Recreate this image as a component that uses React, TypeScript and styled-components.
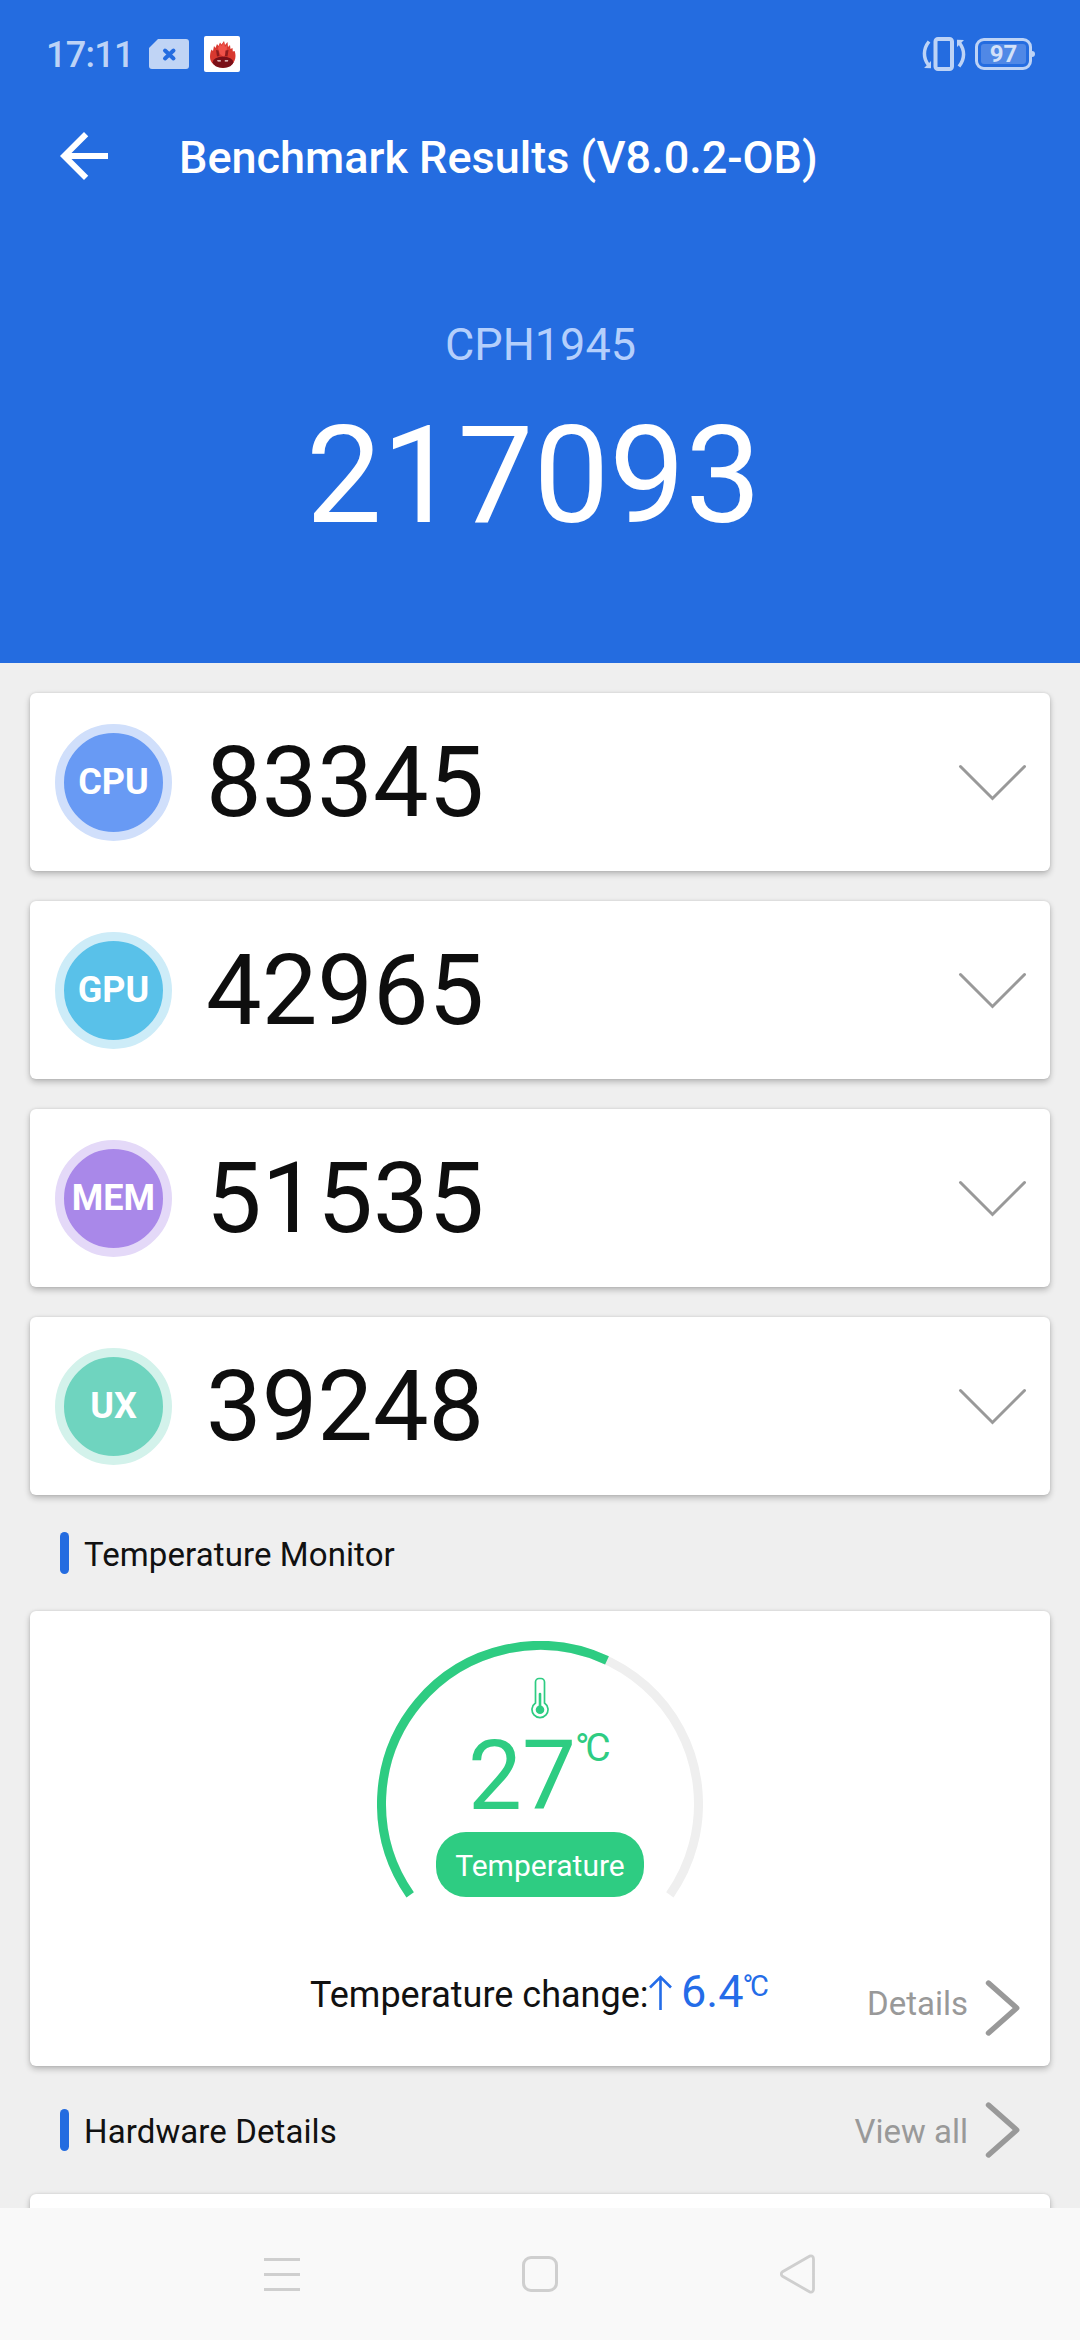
import React from 'react';
import styled, { createGlobalStyle } from 'styled-components';

const Global = createGlobalStyle`
  * { box-sizing: border-box; }
  body { margin: 0; background: #efefef; font-family: Roboto, "Noto Sans", sans-serif; }
  svg { display: block; flex: none; }
`;

const Screen = styled.div`
  width: 1080px;
  height: 2340px;
  display: flex;
  flex-direction: column;
  overflow: hidden;
  background: #efefef;
`;

const Header = styled.header`
  height: 663px;
  flex: none;
  background: #246ce0;
  display: flex;
  flex-direction: column;
`;

const StatusBar = styled.div`
  height: 108px;
  padding: 0 45px 0 46px;
  display: flex;
  align-items: center;
  justify-content: space-between;
  color: #bdd3f6;
`;

const StatusGroup = styled.div<{ $gap: number }>`
  display: flex;
  align-items: center;
  gap: ${(p) => p.$gap}px;
`;

const Clock = styled.span`
  width: 88px;
  font-size: 36px;
  line-height: 42px;
  font-weight: 500;
  letter-spacing: -0.7px;
  padding-top: 2px;
`;

const Battery = styled.div`
  width: 57px;
  height: 32px;
  margin-right: 3px;
  border: 3px solid #bdd3f6;
  border-radius: 9px;
  padding: 3px;
  position: relative;
  &::after {
    content: '';
    position: absolute;
    right: -6px;
    top: 10px;
    width: 3px;
    height: 6px;
    border-radius: 0 3px 3px 0;
    background: #bdd3f6;
  }
`;

const BatteryLevel = styled.div`
  height: 20px;
  border-radius: 3px;
  background: #5088e6;
  color: #d3e1f9;
  font-size: 24px;
  line-height: 20px;
  font-weight: 700;
  text-align: center;
`;

const TitleBar = styled.div`
  height: 96px;
  padding-left: 48px;
  display: flex;
  align-items: center;
  gap: 59px;
`;

const Title = styled.h1`
  margin: 0;
  padding-top: 3px;
  font-size: 45px;
  line-height: 54px;
  font-weight: 500;
  color: #fff;
`;

const Summary = styled.div`
  display: flex;
  flex-direction: column;
  align-items: center;
  padding-top: 114px;
`;

const Device = styled.div`
  padding-left: 1px;
  font-size: 45px;
  line-height: 54px;
  color: #b4cffc;
`;

const Total = styled.div`
  font-size: 135px;
  line-height: 158px;
  margin-top: 25px;
  padding-right: 13px;
  color: #fff;
`;

const Content = styled.main`
  flex: 1;
  min-height: 0;
  overflow: hidden;
  padding: 30px 30px 0;
  display: flex;
  flex-direction: column;
`;

const Card = styled.section<{ $height: number }>`
  height: ${(p) => p.$height}px;
  flex: none;
  border-radius: 6px;
  background: #fff;
  box-shadow: 0 3px 6px rgba(0, 0, 0, 0.24), 0 0 3px rgba(0, 0, 0, 0.1);
`;

const ScoreList = styled.div`
  display: flex;
  flex-direction: column;
  gap: 30px;
`;

const ScoreCard = styled(Card)`
  display: flex;
  align-items: center;
  padding: 0 24px 0 25px;
`;

const Badge = styled.div<{ $fill: string; $ring: string }>`
  width: 117px;
  height: 117px;
  flex: none;
  border-radius: 50%;
  border: 9px solid ${(p) => p.$ring};
  background: ${(p) => p.$fill};
  display: flex;
  align-items: center;
  justify-content: center;
  color: #fff;
  font-size: 36px;
  font-weight: 700;
`;

const Score = styled.div`
  flex: 1;
  margin-left: 34px;
  font-size: 99px;
  line-height: 116px;
  color: #0e0e0e;
`;

const SectionHead = styled.div<{ $height: number; $pad: number }>`
  height: ${(p) => p.$height}px;
  padding: ${(p) => p.$pad}px 28px 0 30px;
  flex: none;
  display: flex;
  align-items: flex-start;
`;

const Marker = styled.div`
  width: 9px;
  height: 42px;
  border-radius: 5px;
  background: #246ce0;
`;

const SectionTitle = styled.h2`
  margin: 3px 0 0 15px;
  flex: 1;
  font-size: 33px;
  line-height: 40px;
  font-weight: 400;
  letter-spacing: 0.1px;
  color: #111;
`;

const MoreLink = styled.div<{ $shift: number }>`
  display: flex;
  align-items: center;
  gap: 17px;
  height: 60px;
  margin-top: ${(p) => p.$shift}px;
  font-size: 33px;
  color: #999;
`;

const MoreText = styled.span<{ $raise: number; $drop: number }>`
  line-height: 40px;
  padding: ${(p) => p.$drop}px 0 ${(p) => p.$raise}px;
`;

const TempCard = styled(Card)`
  display: flex;
  flex-direction: column;
  align-items: center;
`;

const Gauge = styled.div`
  position: relative;
  width: 326px;
  height: 256px;
  margin-top: 30px;
`;

const GaugeContent = styled.div`
  position: absolute;
  inset: 0;
  display: flex;
  flex-direction: column;
  align-items: center;
  padding-top: 36px;
  color: #2ecc82;
`;

const Reading = styled.div`
  align-self: flex-start;
  height: 112px;
  margin: 1px 0 0 91px;
  display: flex;
  align-items: flex-start;
  font-size: 96px;
  line-height: 112px;
`;

const Unit = styled.span<{ $size: number }>`
  margin: 9px 0 0 -1px;
  font-size: ${(p) => p.$size}px;
  line-height: ${(p) => p.$size}px;
  letter-spacing: -0.11em;
`;

const Pill = styled.div`
  width: 208px;
  height: 65px;
  border-radius: 30px;
  background: #2ecc82;
  color: #fff;
  font-size: 30px;
  line-height: 67px;
  text-align: center;
`;

const ChangeRow = styled.div`
  align-self: stretch;
  height: 84px;
  margin-top: 66px;
  padding: 0 28px 0 280px;
  display: flex;
  align-items: flex-start;
`;

const ChangeLabel = styled.span`
  width: 339px;
  font-size: 36px;
  line-height: 42px;
  padding-top: 11px;
  white-space: nowrap;
  color: #111;
`;

const Delta = styled.div`
  flex: 1;
  display: flex;
  align-items: flex-start;
  color: #246ce8;
  font-size: 45px;
  line-height: 54px;
`;

const DeltaIcon = styled.span`
  padding-top: 10px;
`;

const DeltaValue = styled.span`
  margin-left: 8px;
  padding-top: 2px;
`;

const NavBar = styled.nav`
  height: 132px;
  flex: none;
  background: #f9f9f9;
  display: flex;
  align-items: center;
  justify-content: space-between;
  padding: 0 264px;
`;

const SimIcon = () => (
  <svg width="40" height="30" viewBox="0 0 40 30">
    <path d="M9 0H37a3 3 0 0 1 3 3V27a3 3 0 0 1-3 3H3a3 3 0 0 1-3-3V9Z" fill="#c0d4f5" />
    <path d="M16 11.500l8.500 8M24.500 11.500l-8.500 8" stroke="#246ce0" strokeWidth="4" strokeLinecap="round" />
  </svg>
);

const FlameIcon = () => (
  <svg width="36" height="36" viewBox="0 0 36 36">
    <rect width="36" height="36" rx="2" fill="#fff" />
    <path d="M6 21c0-3 .5-5 1.500-7.500L9 15l1-5 1.500 2L13 8l1.500 2L16 6.500l1.500 2L20 5l1 4 2.500-3 .5 5 2-2 .5 4 2-1 .3 3.500 1.800-.5c.6 1.800.9 3 .9 5C31.500 27 26 31.500 18.800 31.500S6 27 6 21Z" fill="#d8382f" />
    <path d="M14 12l2-4 1.500 2L20 6l1 5 2-2-.5 8-3 4-3.500-3Z" fill="#f0524a" />
    <path d="M12 14l2.500.5 1 5.500-2.500.5ZM24.500 14l-3 .5-.5 5.500 2.500.5Z" fill="#8e1c1e" />
    <ellipse cx="19" cy="26.200" rx="10.300" ry="5.700" fill="#7a0f18" />
    <path d="M13 24.300h3.800v1.200h-3ZM24.300 24.300h-3.500v1.200h3Z" fill="#f6e4e4" />
  </svg>
);

const VibrateIcon = () => (
  <svg width="44" height="36" viewBox="0 0 44 36" fill="none" stroke="#bdd3f6">
    <rect x="13.500" y="3" width="16.500" height="30" rx="2.500" strokeWidth="4" />
    <path d="M7 5.500C1 13 1 22 6.500 29" strokeWidth="3.500" />
    <path d="M37 30.500C43 23 43 14 37.500 7" strokeWidth="3.500" />
    <path d="M2 32l7 .3V25ZM42 4l-7-.3V11Z" fill="#bdd3f6" stroke="none" />
  </svg>
);

const BackArrow = () => (
  <svg width="72" height="72" viewBox="0 0 24 24">
    <path d="M20 11H7.830l5.590-5.590L12 4l-8 8 8 8 1.410-1.410L7.830 13H20v-2z" fill="#fff" />
  </svg>
);

const ChevronDown = () => (
  <svg width="68" height="40" viewBox="0 0 68 40">
    <path d="M2.500 4.500L34.500 36.500L66.500 4.500" fill="none" stroke="#999" strokeWidth="3" strokeLinecap="round" />
  </svg>
);

const ChevronRight = () => (
  <svg width="37" height="60" viewBox="0 0 37 60">
    <path d="M3.500 5L31.700 30L3.500 55" fill="none" stroke="#999" strokeWidth="5.400" strokeLinecap="round" strokeLinejoin="round" />
  </svg>
);

const RADIUS = 158.5;
const CENTER = 163;
const arc = (from: number, to: number) => {
  const at = (deg: number) => {
    const r = (deg * Math.PI) / 180;
    return `${CENTER + RADIUS * Math.cos(r)} ${CENTER + RADIUS * Math.sin(r)}`;
  };
  return `M${at(from)}A${RADIUS} ${RADIUS} 0 ${to - from > 180 ? 1 : 0} 1 ${at(to)}`;
};

const GaugeArc = () => (
  <svg width="326" height="260" viewBox="0 0 326 260" fill="none" strokeWidth="9">
    <path d={arc(145, 395)} stroke="#efefef" />
    <path d={arc(145, 295)} stroke="#2ecc82" />
  </svg>
);

const Thermometer = () => (
  <svg width="18" height="42" viewBox="0 0 18 42" fill="none" stroke="#2ecc82">
    <path d="M4.500 26V5a3.500 3.500 0 0 1 3.500-3.500h2A3.500 3.500 0 0 1 13.500 5V26a8 8 0 1 1-9 0Z" strokeWidth="1.700" />
    <path d="M9 17V32" strokeWidth="2.600" strokeLinecap="round" />
    <circle cx="9" cy="32.700" r="4.300" fill="#2ecc82" stroke="none" />
  </svg>
);

const UpArrow = () => (
  <svg width="24" height="38" viewBox="0 0 24 38">
    <path d="M11.500 37V4M1 14.500L11.500 4L22 14.500" fill="none" stroke="#246ce8" strokeWidth="2.600" />
  </svg>
);

const RecentsIcon = () => (
  <svg width="36" height="36" viewBox="0 0 36 36">
    <path d="M0 3.500H36M0 18.500H36M0 33.500H36" stroke="#cfcfcf" strokeWidth="3" />
  </svg>
);

const HomeIcon = () => (
  <svg width="36" height="36" viewBox="0 0 36 36">
    <rect x="1.500" y="1.500" width="33" height="33" rx="7.500" fill="none" stroke="#cfcfcf" strokeWidth="3" />
  </svg>
);

const BackIcon = () => (
  <svg width="36" height="42" viewBox="2 0 36 42">
    <path d="M31.500 3.200L4.500 18.800Q2 21 4.500 23.200L31.500 38.800Q35.500 40 35.500 36V6Q35.500 2 31.500 3.200Z" fill="none" stroke="#cfcfcf" strokeWidth="2.800" strokeLinejoin="round" />
  </svg>
);

const scores = [
  { label: 'CPU', value: 83345, fill: '#689af4', ring: '#d0dffb' },
  { label: 'GPU', value: 42965, fill: '#59c1e9', ring: '#cdecf8' },
  { label: 'MEM', value: 51535, fill: '#a988e9', ring: '#e4d9f8' },
  { label: 'UX', value: 39248, fill: '#6fd4bf', ring: '#d3f2eb' },
];

export default function App() {
  return (
    <Screen>
      <Global />
      <Header>
        <StatusBar>
          <StatusGroup $gap={15}>
            <Clock>17:11</Clock>
            <SimIcon />
            <FlameIcon />
          </StatusGroup>
          <StatusGroup $gap={9}>
            <VibrateIcon />
            <Battery>
              <BatteryLevel>97</BatteryLevel>
            </Battery>
          </StatusGroup>
        </StatusBar>
        <TitleBar>
          <BackArrow />
          <Title>Benchmark Results (V8.0.2-OB)</Title>
        </TitleBar>
        <Summary>
          <Device>CPH1945</Device>
          <Total>217093</Total>
        </Summary>
      </Header>
      <Content>
        <ScoreList>
          {scores.map((s) => (
            <ScoreCard key={s.label} $height={178}>
              <Badge $fill={s.fill} $ring={s.ring}>{s.label}</Badge>
              <Score>{s.value}</Score>
              <ChevronDown />
            </ScoreCard>
          ))}
        </ScoreList>
        <SectionHead $height={116} $pad={37}>
          <Marker />
          <SectionTitle>Temperature Monitor</SectionTitle>
        </SectionHead>
        <TempCard $height={455}>
          <Gauge>
            <GaugeArc />
            <GaugeContent>
              <Thermometer />
              <Reading>
                27
                <Unit $size={39}>°C</Unit>
              </Reading>
              <Pill>Temperature</Pill>
            </GaugeContent>
          </Gauge>
          <ChangeRow>
            <ChangeLabel>Temperature change:</ChangeLabel>
            <Delta>
              <DeltaIcon>
                <UpArrow />
              </DeltaIcon>
              <DeltaValue>6.4</DeltaValue>
              <Unit $size={29}>°C</Unit>
            </Delta>
            <MoreLink $shift={15}>
              <MoreText $raise={8} $drop={0}>Details</MoreText>
              <ChevronRight />
            </MoreLink>
          </ChangeRow>
        </TempCard>
        <SectionHead $height={128} $pad={43}>
          <Marker />
          <SectionTitle>Hardware Details</SectionTitle>
          <MoreLink $shift={-9}>
            <MoreText $raise={0} $drop={3}>View all</MoreText>
            <ChevronRight />
          </MoreLink>
        </SectionHead>
        <Card $height={178} />
      </Content>
      <NavBar>
        <RecentsIcon />
        <HomeIcon />
        <BackIcon />
      </NavBar>
    </Screen>
  );
}
